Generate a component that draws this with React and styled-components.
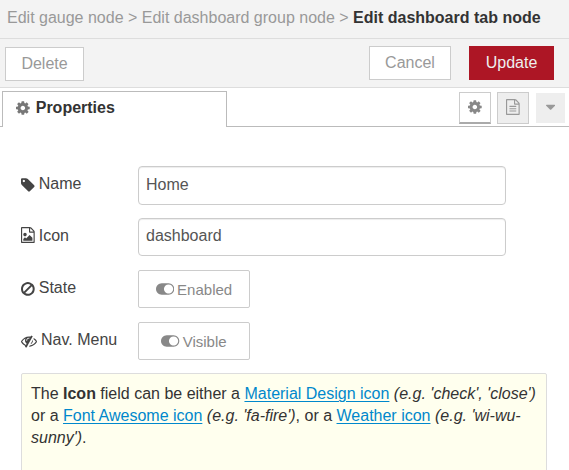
import React from "react";
import styled, { createGlobalStyle, css } from "styled-components";

const GlobalStyle = createGlobalStyle`
  *, *::before, *::after { box-sizing: border-box; }
  body {
    margin: 0;
    background: #fff;
    color: #333;
    font-family: "Liberation Sans", Arial, Helvetica, sans-serif;
    font-size: 16px;
    overflow: hidden;
  }
  button, input { font: inherit; }
`;

const Tray = styled.div`
  display: flex;
  flex-direction: column;
  width: 569px;
  height: 470px;
  overflow: hidden;
`;

const Header = styled.header`
  flex: none;
  height: 39px;
  padding: 0 7px;
  border-bottom: 1px solid #ddd;
  background: #f3f3f3;
  color: #999;
  line-height: 35px;
  white-space: pre;
`;

const Current = styled.span`
  color: #333;
  font-weight: bold;
`;

const Toolbar = styled.div`
  display: flex;
  flex: none;
  align-items: flex-start;
  gap: 18px;
  height: 49px;
  padding: 7px 15px 0 5px;
  border-bottom: 1px solid #ddd;
  background: #f3f3f3;
`;

const Button = styled.button`
  width: ${(p) => p.$width}px;
  height: 34px;
  padding: 0;
  border: 1px solid #ccc;
  background: #fff;
  color: #999;
  line-height: 30px;
  ${(p) => p.$primary && css`
    border-color: #ad1625;
    background: #ad1625;
    color: #eee;
  `}
`;

const DeleteButton = styled(Button)`
  margin: 1px auto 0 0;
`;

const TabBar = styled.div`
  display: flex;
  flex: none;
  height: 39px;
  padding-top: 3px;
`;

const TabEdge = styled.div`
  width: 2px;
  border-bottom: 1px solid #bbb;
`;

const Tab = styled.div`
  display: flex;
  gap: 6px;
  width: 225px;
  padding: 0 0 3px 13px;
  border: 1px solid #bbb;
  border-bottom: 0;
  font-weight: bold;
  line-height: 32px;
  color: #333;
`;

const TabTools = styled.div`
  display: flex;
  flex: 1;
  justify-content: flex-end;
  gap: 6px;
  padding: 1px 4px 0 0;
  border-bottom: 1px solid #bbb;
`;

const ToolButton = styled.button`
  display: flex;
  align-items: center;
  justify-content: center;
  width: 32px;
  height: 32px;
  padding: 0 0 2px;
  border: 1px solid #ccc;
  background: #eee;
  color: #999;
  ${(p) => p.$active && css`
    border-bottom: 2px solid #aaa;
    background: #fff;
    color: #888;
    padding-bottom: 1px;
  `}
`;

const MenuButton = styled(ToolButton)`
  width: 29px;
  height: 30px;
  margin: 1px 0 0 1px;
  border: 0;
`;

const Form = styled.form`
  display: flex;
  flex: 1;
  flex-direction: column;
  padding: 39px 22px 0 21px;
`;

const Row = styled.div`
  display: flex;
  align-items: flex-start;
  flex: none;
  height: 52px;
`;

const Label = styled.label`
  display: flex;
  align-items: flex-start;
  gap: 4px;
  width: 117px;
  line-height: 36px;
  color: #444;
  white-space: nowrap;
`;

const TextInput = styled.input`
  width: 368px;
  height: ${(p) => p.$height || 38}px;
  padding: 0 7px 2px;
  border: 1px solid #ccc;
  border-radius: 4px;
  outline: 0;
  box-shadow: inset 0 1px 1px rgba(0, 0, 0, 0.075);
  background: #fff;
  color: #555;
`;

const Toggle = styled.button`
  display: flex;
  align-items: center;
  justify-content: center;
  gap: 3px;
  width: 112px;
  height: 38px;
  padding: 0;
  border: 1px solid #ccc;
  border-radius: 2px;
  background: #fff;
  color: #888;
  font-size: 15px;
`;

const Tip = styled.div`
  flex: none;
  height: 110px;
  margin-top: -1px;
  padding: 9px 9px;
  border: 1px solid #ddd;
  border-radius: 2px;
  background: #ffe;
  line-height: 22px;
  white-space: nowrap;
`;

const Link = styled.a`
  color: #0088cc;
  text-decoration: underline;
  text-underline-offset: 2px;
  text-decoration-thickness: 1px;
`;

const Glyph = styled.svg`
  flex: none;
  width: ${(p) => p.$width}px;
  height: 16px;
  margin-top: ${(p) => p.$top || 0}px;
  fill: ${(p) => p.$color || "currentColor"};
`;

const page =
  "M1596 380q28 28 48 76t20 88v1152q0 40-28 68t-68 28h-1344q-40 0-68-28t-28-68v-1600q0-40 28-68t68-28h896q40 0 88 20t76 48zm-444-244v376h376q-10-29-22-41l-313-313q-12-12-41-22zm384 1528v-1024h-416q-40 0-68-28t-28-68v-416h-768v1536h1280z";

const icons = {
  cog: [128, 1536, "M1152 896q0-106-75-181t-181-75-181 75-75 181 75 181 181 75 181-75 75-181zm512-109v222q0 12-8 23t-20 13l-185 28q-19 54-39 91 35 50 107 138 10 12 10 25t-9 23q-27 37-99 108t-94 71q-12 0-26-9l-138-108q-44 23-91 38-16 136-29 186-7 28-36 28h-222q-14 0-24.5-8.5t-11.5-21.5l-28-184q-49-16-90-37l-141 107q-10 9-25 9-14 0-25-11-126-114-165-168-7-10-7-23 0-12 8-23 15-21 51-66.5t54-70.5q-27-50-41-99l-183-27q-13-2-21-12.5t-8-23.5v-222q0-12 8-23t19-13l186-28q14-46 39-92-40-57-107-138-10-12-10-24 0-10 9-23 26-36 98.5-107.5t94.5-71.5q13 0 26 10l138 107q44-23 91-38 16-136 29-186 7-28 36-28h222q14 0 24.5 8.5t11.5 21.5l28 184q49 16 90 37l142-107q9-9 24-9 13 0 25 10 129 119 165 170 7 8 7 22 0 12-8 23-15 21-51 66.5t-54 70.5q26 50 41 98l183 28q13 2 21 12.5t8 23.5z"],
  tag: [128, 1536, "M576 448q0-53-37.5-90.5t-90.5-37.5-90.5 37.5-37.5 90.5 37.5 90.5 90.5 37.5 90.5-37.5 37.5-90.5zm1067 576q0 53-37 90l-491 492q-39 37-91 37-53 0-90-37l-715-716q-38-37-64.5-101t-26.5-117v-416q0-52 38-90t90-38h416q53 0 117 26.5t102 64.5l715 714q37 39 37 91z"],
  image: [128, 1536, page + "m-128-448v320h-1024v-192l192-192 128 128 384-384zm-832-192q-80 0-136-56t-56-136 56-136 136-56 136 56 56 136-56 136-136 56z"],
  doc: [128, 1536, page + "m-1024-864q0-14 9-23t23-9h704q14 0 23 9t9 23v64q0 14-9 23t-23 9h-704q-14 0-23-9t-9-23v-64zm736 224q14 0 23 9t9 23v64q0 14-9 23t-23 9h-704q-14 0-23-9t-9-23v-64q0-14 9-23t23-9h704zm0 256q14 0 23 9t9 23v64q0 14-9 23t-23 9h-704q-14 0-23-9t-9-23v-64q0-14 9-23t23-9h704z"],
  ban: [128, 1536, "M1440 893q0-161-87-295l-754 753q137 89 297 89 111 0 211.5-43.5t173.5-116.5 116-174.5 43-212.5zm-999 299l755-754q-135-91-300-91-148 0-273 73t-198 199-73 274q0 162 89 299zm1223-299q0 157-61 300t-163.5 246-245 164-298.5 61-298.5-61-245-164-163.5-246-61-300 61-299.5 163.5-245.5 245-164 298.5-61 298.5 61 245 164 163.5 245.5 61 299.5z"],
  eyeSlash: [0, 1792, "M555 1335l78-141q-87-63-136-159t-49-203q0-121 61-225-229 117-381 353 167 258 427 375zm389-759q0-20-14-34t-34-14q-125 0-214.5 89.5t-89.5 214.5q0 20 14 34t34 14 34-14 14-34q0-86 61-147t147-61q20 0 34-14t14-34zm363-191q0 7-1 9-106 189-316 567t-315 566l-49 89q-10 16-28 16-12 0-134-70-16-10-16-28 0-12 44-87-143-65-263.5-173t-208.5-245q-20-31-20-69t20-69q153-235 380-371t496-136q89 0 180 17l54-97q10-16 28-16 5 0 18 6t31 15.5 33 18.5 31.5 18.5 19.5 11.5q16 10 16 27zm37 447q0 139-79 253.5t-209 164.5l280-502q8 45 8 84zm448 128q0 35-20 69-39 64-109 145-150 172-347.5 267t-419.5 95l74-132q212-18 392.5-137t301.5-307q-115-179-282-294l63-112q95 64 182.5 153t144.5 184q20 34 20 69z"],
  toggle: [0, 2048, "M0 896q0-130 51-248.5t136.5-204 204-136.5 248.5-51h768q130 0 248.5 51t204 136.5 136.5 204 51 248.5-51 248.5-136.5 204-204 136.5-248.5 51h-768q-130 0-248.5-51t-204-136.5-136.5-204-51-248.5zm1408 512q104 0 198.5-40.5t163.5-109.5 109.5-163.5 40.5-198.5-40.5-198.5-109.5-163.5-163.5-109.5-198.5-40.5-198.5 40.5-163.5 109.5-109.5 163.5-40.5 198.5 40.5 198.5 109.5 163.5 163.5 109.5 198.5 40.5z"],
  caret: [384, 1024, "M1408 704q0 26-19 45l-448 448q-19 19-45 19t-45-19l-448-448q-19-19-19-45t19-45 45-19h896q26 0 45 19t19 45z"],
};

function Icon({ name, top, color }) {
  const [x, w, d] = icons[name];
  return (
    <Glyph viewBox={`${x} 0 ${w} 1792`} $width={(w / 1792) * 16} $top={top} $color={color} aria-hidden="true">
      <path d={d} />
    </Glyph>
  );
}

export default function App() {
  return (
    <>
      <GlobalStyle />
      <Tray>
        <Header>
          Edit gauge node &gt; Edit dashboard group node &gt; <Current>Edit dashboard tab node</Current>
        </Header>
        <Toolbar>
          <DeleteButton $width={79}>Delete</DeleteButton>
          <Button $width={82}>Cancel</Button>
          <Button $width={85} $primary>Update</Button>
        </Toolbar>
        <TabBar>
          <TabEdge />
          <Tab>
            <Icon name="cog" top={8} color="#777" />
            Properties
          </Tab>
          <TabTools>
            <ToolButton $active aria-label="Properties"><Icon name="cog" /></ToolButton>
            <ToolButton aria-label="Description"><Icon name="doc" /></ToolButton>
            <MenuButton aria-label="More"><Icon name="caret" /></MenuButton>
          </TabTools>
        </TabBar>
        <Form>
          <Row>
            <Label><Icon name="tag" top={11} />Name</Label>
            <TextInput defaultValue="Home" $height={39} />
          </Row>
          <Row>
            <Label><Icon name="image" top={9} />Icon</Label>
            <TextInput defaultValue="dashboard" />
          </Row>
          <Row>
            <Label><Icon name="ban" top={11} />State</Label>
            <Toggle type="button"><Icon name="toggle" />Enabled</Toggle>
          </Row>
          <Row>
            <Label><Icon name="eyeSlash" top={11} />Nav. Menu</Label>
            <Toggle type="button"><Icon name="toggle" />Visible</Toggle>
          </Row>
          <Tip>
            The <b>Icon</b> field can be either a <Link>Material Design icon</Link> <i>(e.g. 'check', 'close')</i>
            <br />
            or a <Link>Font Awesome icon</Link> <i>(e.g. 'fa-fire')</i>, or a <Link>Weather icon</Link> <i>(e.g. 'wi-wu-</i>
            <br />
            <i>sunny')</i>.
          </Tip>
        </Form>
      </Tray>
    </>
  );
}
